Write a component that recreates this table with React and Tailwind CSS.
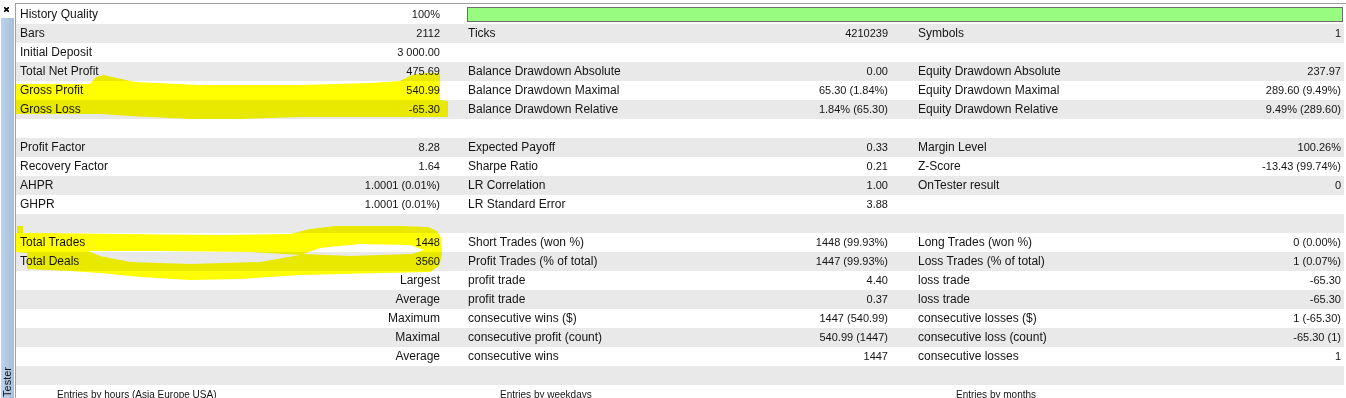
import React from 'react'

// Strategy tester report rows: [label1, value1, label2, value2, label3, value3]
const rows = [
  ['History Quality', '100%', 'BAR'],
  ['Bars', '2112', 'Ticks', '4210239', 'Symbols', '1'],
  ['Initial Deposit', '3 000.00', '', '', '', ''],
  ['Total Net Profit', '475.69', 'Balance Drawdown Absolute', '0.00', 'Equity Drawdown Absolute', '237.97'],
  ['Gross Profit', '540.99', 'Balance Drawdown Maximal', '65.30 (1.84%)', 'Equity Drawdown Maximal', '289.60 (9.49%)'],
  ['Gross Loss', '-65.30', 'Balance Drawdown Relative', '1.84% (65.30)', 'Equity Drawdown Relative', '9.49% (289.60)'],
  ['', '', '', '', '', ''],
  ['Profit Factor', '8.28', 'Expected Payoff', '0.33', 'Margin Level', '100.26%'],
  ['Recovery Factor', '1.64', 'Sharpe Ratio', '0.21', 'Z-Score', '-13.43 (99.74%)'],
  ['AHPR', '1.0001 (0.01%)', 'LR Correlation', '1.00', 'OnTester result', '0'],
  ['GHPR', '1.0001 (0.01%)', 'LR Standard Error', '3.88', '', ''],
  ['', '', '', '', '', ''],
  ['Total Trades', '1448', 'Short Trades (won %)', '1448 (99.93%)', 'Long Trades (won %)', '0 (0.00%)'],
  ['Total Deals', '3560', 'Profit Trades (% of total)', '1447 (99.93%)', 'Loss Trades (% of total)', '1 (0.07%)'],
  ['', 'Largest', 'profit trade', '4.40', 'loss trade', '-65.30'],
  ['', 'Average', 'profit trade', '0.37', 'loss trade', '-65.30'],
  ['', 'Maximum', 'consecutive wins ($)', '1447 (540.99)', 'consecutive losses ($)', '1 (-65.30)'],
  ['', 'Maximal', 'consecutive profit (count)', '540.99 (1447)', 'consecutive loss (count)', '-65.30 (1)'],
  ['', 'Average', 'consecutive wins', '1447', 'consecutive losses', '1'],
  ['', '', '', '', '', ''],
]

const isNum = (s) => /^[-\d]/.test(s)

function Value({ text, className }) {
  return (
    <div className={`text-right whitespace-nowrap overflow-hidden ${isNum(text) ? 'text-[11px]' : 'text-[12px]'} ${className}`}>
      {text}
    </div>
  )
}

function Row({ cells, shaded }) {
  const [l1, v1, l2, v2, l3, v3] = cells
  return (
    <div className={`shrink-0 grid grid-cols-[224px_208px_242px_206px_244px_1fr] h-[19px] leading-[19px] ${shaded ? 'bg-[#e9e9e9]' : 'bg-white'}`}>
      <div className="pl-[4px] text-[12px] whitespace-nowrap">{l1}</div>
      <Value text={v1} className="pr-[8px]" />
      {l2 === 'BAR' ? (
        <div className="col-span-4 flex items-center pl-[19px] pr-[1px]">
          <div className="h-[15px] w-full border border-[#6e6e6e] bg-[#98fc80]" />
        </div>
      ) : (
        <>
          <div className="pl-[20px] text-[12px] whitespace-nowrap">{l2}</div>
          <Value text={v2} className="pr-[8px]" />
          <div className="pl-[22px] text-[12px] whitespace-nowrap">{l3}</div>
          <Value text={v3} className="pr-[3px]" />
        </>
      )}
    </div>
  )
}

function Highlights() {
  // marker strokes drawn over the report
  return (
    <svg className="absolute left-0 top-0 pointer-events-none mix-blend-multiply" width="1346" height="398" viewBox="0 0 1346 398">
      <path
        fill="#ffff00"
        d="M16,84 L90,84 L96,77 L104,75 L112,77 L135,82 L200,85 L300,85 L370,83 L400,81 L412,75 L425,73 L440,73 L440,100 L448,101 L448,117 L400,117 L300,117 L240,119 L190,119 L130,116 L100,114 L16,114 Z"
      />
      <path
        fill="#ffff00"
        fillRule="evenodd"
        d="M16,233 L40,233 L120,234 L220,235 L290,234 L310,229 L335,226 L400,226 L428,227 L437,231 L441,238 L442,255 L439,266 L430,272 L380,273 L300,275 L240,279 L190,280 L140,277 L100,273 L70,271 L27,269 L27,253 L16,252 Z M88,251 L160,251 L250,252 L300,255 L260,262 L190,264 L130,262 L100,256 Z M303,254 L320,248 L360,244 L410,245 L424,250 L412,254 L350,256 Z"
      />
      <path fill="#ffff00" d="M17,226 L23,226 L23,233 L17,233 Z" />
    </svg>
  )
}

export default function App() {
  return (
    <div className="relative w-[1346px] h-[398px] overflow-hidden bg-white flex font-['Liberation_Sans',Arial,sans-serif] text-[#141414]">
      {/* Tester side tab */}
      <div className="w-[15px] shrink-0 flex flex-col">
        <div className="h-[18px] shrink-0 pl-[4px] pt-[7px]">
          <svg width="5" height="5" viewBox="0 0 5 5">
            <path d="M0,0 L5,5 M5,0 L0,5" stroke="#000" strokeWidth="1.6" />
          </svg>
        </div>
        <div className="flex-1 ml-[1px] w-[13px] bg-linear-to-r from-[#bed3eb] to-[#a6bfdc] flex flex-col justify-end items-center">
          <span className="[writing-mode:vertical-rl] rotate-180 text-[11px] leading-[13px] pt-[1px]">Tester</span>
        </div>
      </div>

      {/* report table */}
      <div className="flex-1 mt-[3px] border-l border-t border-[#a0a0a0] pt-[1px] pr-[2px] flex flex-col overflow-hidden">
        {rows.map((r, i) => (
          <Row key={i} cells={r} shaded={i % 2 === 1} />
        ))}
        <div className="shrink-0 flex h-[19px] leading-[19px] text-[10px] bg-white whitespace-nowrap">
          <div className="w-[444px] pl-[41px]">Entries by hours (Asia Europe USA)</div>
          <div className="w-[450px] pl-[40px]">Entries by weekdays</div>
          <div className="pl-[46px]">Entries by months</div>
        </div>
      </div>

      <Highlights />
    </div>
  )
}
